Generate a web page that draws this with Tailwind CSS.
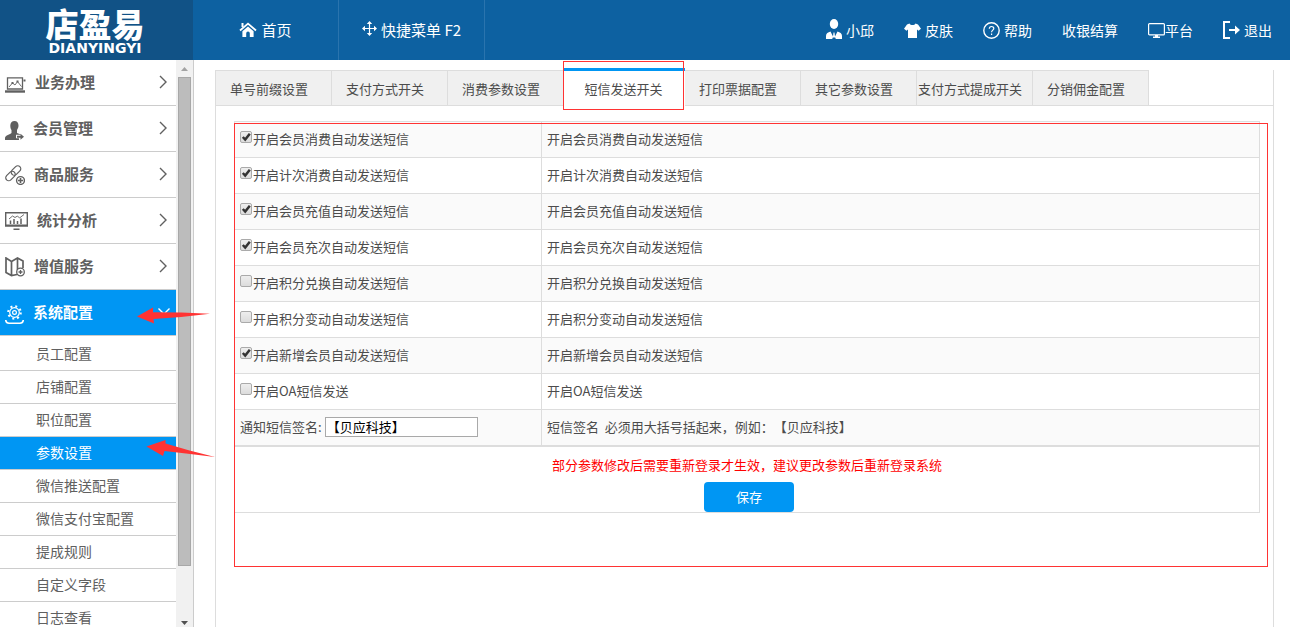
<!DOCTYPE html>
<html lang="zh-CN">
<head>
<meta charset="utf-8">
<meta name="viewport" content="width=device-width, initial-scale=1">
<title>店盈易 - 参数设置</title>
<script src="https://cdn.jsdelivr.net/npm/@tailwindcss/browser@4"></script>
</head>
<body class="flex h-screen flex-col overflow-hidden bg-white font-['Noto_Sans_CJK_SC',sans-serif] text-[13px] text-[#4c4c4c] [text-spacing-trim:space-all]">

<svg class="hidden" aria-hidden="true">
  <symbol id="chev" viewBox="0 0 8 14"><path d="M1 1l6 6-6 6" fill="none" stroke="currentColor" stroke-width="1.4"/></symbol>
  <symbol id="tick" viewBox="0 0 12 12"><path d="M2.800 6l2.400 2.600L9.800 2.800" fill="none" stroke="#333" stroke-width="2.500"/></symbol>
</svg>

<header class="flex h-[60px] shrink-0 items-stretch bg-[#0d61a1] text-white">
  <a href="#" class="flex w-[193px] shrink-0 flex-col items-center bg-[#115286] pt-[6px] pr-[3px]">
    <span class="text-[33px] leading-[34px] font-black">店盈易</span>
    <span class="mt-[2px] font-['DejaVu_Sans',sans-serif] text-[14px] leading-[12px] font-bold">DIANYINGYI</span>
  </a>
  <nav class="flex text-[15px]">
    <a href="#" class="flex w-[146px] items-center justify-center gap-1 border-r border-[#2a74ae]">
      <svg class="h-4 w-[18px]" viewBox="0 0 18 16" fill="none" stroke="#fff"><path d="M1 8.5L9 1.600l8 6.900" stroke-width="1.800"/><path d="M3.500 1v4" stroke-width="2"/><path d="M3.400 9.200L9 4.400l5.600 4.800V15h-3.800v-3.600a1.800 1.800 0 0 0-3.600 0V15H3.400z" fill="#fff" stroke="none"/></svg>
      <span>首页</span>
    </a>
    <a href="#" class="flex w-[146px] items-center justify-center gap-1 border-r border-[#2a74ae]">
      <svg class="mb-1 size-[15px]" viewBox="0 0 15 15" fill="none" stroke="#fff"><path d="M7.500 1.500v12M1.500 7.500h12" stroke-width="1.200"/><path d="M7.500 0L4.800 3h5.400zM7.500 15l-2.700-3h5.400zM0 7.500l3-2.700v5.400zM15 7.500l-3-2.700v5.400z" fill="#fff" stroke="none"/></svg>
      <span>快捷菜单 F2</span>
    </a>
  </nav>
  <nav class="ml-auto flex items-center gap-[30px] pr-[18px] text-[14px]">
    <a href="#" class="flex items-center gap-1">
      <svg class="mb-[2px] h-5 w-4" viewBox="0 0 16 20" fill="#fff"><ellipse cx="8" cy="5" rx="4.200" ry="5"/><path d="M0 20v-3c0-2.600 2-3.800 4.500-4.500L7 17.500l.5-4h1l.5 4 2.500-5C14 13.200 16 14.400 16 17v3H9.800l-.6-1.500H6.800L6.200 20z"/></svg>
      <span>小邱</span>
    </a>
    <a href="#" class="flex items-center gap-1">
      <svg class="h-[15px] w-[17px]" viewBox="0 0 17 15" fill="#fff"><path d="M5.500 0.500c1 2 5 2 6 0L14 1.500l3 4.200-2.500 2-1.500-1.200V15H4V6.500L2.500 7.700 0 5.700 3 1.500z"/></svg>
      <span>皮肤</span>
    </a>
    <a href="#" class="flex items-center gap-1">
      <svg class="size-[17px]" viewBox="0 0 17 17" fill="none" stroke="#fff"><circle cx="8.500" cy="8.500" r="7.700" stroke-width="1.400"/><path d="M6.300 6.800c0-3 4.500-3 4.500-.3 0 1.600-2.200 1.700-2.200 3.700M8.600 11.500v1.400" stroke-width="1.200"/></svg>
      <span>帮助</span>
    </a>
    <a href="#">收银结算</a>
    <a href="#" class="flex items-center">
      <svg class="h-[15px] w-[17px]" viewBox="0 0 17 15" fill="none" stroke="#fff"><rect x=".6" y=".6" width="15.800" height="11.300" rx="1" stroke-width="1.200"/><path d="M7 12h3v1.500h2V15H5v-1.500h2z" fill="#fff" stroke="none"/></svg>
      <span>平台</span>
    </a>
    <a href="#" class="flex items-center gap-1">
      <svg class="h-[18px] w-[17px]" viewBox="0 0 17 18" fill="none" stroke="#fff" stroke-width="2"><path d="M7 1H1v16h6M6 9h8"/><path d="M12 4.500L17 9l-5 4.500z" fill="#fff" stroke="none"/></svg>
      <span>退出</span>
    </a>
  </nav>
</header>

<div class="flex min-h-0 flex-1">
  <aside class="flex w-[194px] shrink-0 border-r border-[#ccc]">
    <nav class="min-w-0 flex-1 overflow-hidden text-[15px] font-bold text-[#606060]">
      <a href="#" class="flex h-[46px] items-center gap-[9px] border-b border-[#ccc] pr-[9px] pl-[5px]">
        <svg class="mt-1 h-4 w-[21px]" viewBox="0 0 21 16" fill="none" stroke="#606060"><path d="M2.500 12V.8h15V12z" stroke-width="1.300"/><path d="M0 14.500h20" stroke-width="2.400"/><path d="M4 10l3.500-4L10 8l2.500-3.400 4 5" stroke-width=".9"/><path d="M18.500 2.500h2v2h-2zM6.500 5h2v2h-2zM11.500 3.500h2v2h-2z" fill="#606060" stroke="none"/></svg>
        <span>业务办理</span><svg class="mb-[2px] ml-auto h-[14px] w-2"><use href="#chev"/></svg>
      </a>
      <a href="#" class="flex h-[46px] items-center gap-[9px] border-b border-[#ccc] pr-[9px] pl-[5px]">
        <svg class="mt-1 h-[19px] w-[19px]" viewBox="0 0 19 19" fill="#606060"><path d="M9.500 0c2.600 0 4 1.800 4 4.500 0 2-.8 3.400-1.500 4.500v3l4.500 1.800H11v3.400h3V19H0v-2c0-2.500 4-3.200 6.500-5V9C5.800 8 5.300 6.500 5.300 4.500 5.300 1.800 6.900 0 9.500 0z"/><path d="M12 14.800h3.500v-2L19 15.700l-3.500 3v-2H12z"/></svg>
        <span>会员管理</span><svg class="mb-[2px] ml-auto h-[14px] w-2"><use href="#chev"/></svg>
      </a>
      <a href="#" class="flex h-[46px] items-center gap-[9px] border-b border-[#ccc] pr-[9px] pl-[5px]">
        <svg class="h-5 w-5" viewBox="0 0 20 20" fill="none" stroke="#606060" stroke-width="1.200"><rect x="-5.500" y="-3" width="11" height="6" rx="3" transform="translate(5.500 11) rotate(-45)"/><rect x="-5.500" y="-3" width="11" height="6" rx="3" transform="translate(11 5.500) rotate(-45)"/><circle cx="15.500" cy="15.500" r="3.900" fill="#fff" stroke-width="1.400"/><path d="M15.500 13v5M13 15.500h5" stroke-width="1.600"/></svg>
        <span>商品服务</span><svg class="mb-[2px] ml-auto h-[14px] w-2"><use href="#chev"/></svg>
      </a>
      <a href="#" class="flex h-[46px] items-center gap-[9px] border-b border-[#ccc] pr-[9px] pl-[5px]">
        <svg class="h-[18px] w-[23px]" viewBox="0 0 23 18" fill="none" stroke="#606060"><path d="M.7.7h21.600v12.600H.7z" stroke-width="1.400"/><path d="M0 14h23M8.500 17.200h6" stroke-width="1.600"/><path d="M5.500 12V8.500M9 12V7M12.500 12V9M16 12V6.500" stroke-width="1.500"/><path d="M4 7l3.500-3 2.500 1.500L12.500 4l2 2L19 2.500" stroke-width=".9"/></svg>
        <span>统计分析</span><svg class="mb-[2px] ml-auto h-[14px] w-2"><use href="#chev"/></svg>
      </a>
      <a href="#" class="flex h-[46px] items-center gap-[9px] border-b border-[#ccc] pr-[9px] pl-[5px]">
        <svg class="h-5 w-5" viewBox="0 0 20 20" fill="none" stroke="#606060" stroke-width="1.700"><path d="M12 17.500l-5.500 1L1 15.500V1l5.500 3.500L12.500 1 18 4v7M6.500 4.500v14M12.500 1v12"/><circle cx="15.500" cy="15" r="3.800" fill="#fff" stroke-width="1.300"/><path d="M15.500 13v4M13.500 15h4" stroke-width="1.300"/></svg>
        <span>增值服务</span><svg class="mb-[2px] ml-auto h-[14px] w-2"><use href="#chev"/></svg>
      </a>
      <a href="#" class="flex h-[46px] items-center gap-[9px] border-b border-[#ccc] bg-[#0096f3] pr-[6px] pl-[5px] text-white">
        <svg class="mt-1 h-[19px] w-[19px]" viewBox="0 0 19 19" fill="none" stroke="#fff"><circle cx="9.500" cy="7.500" r="4.800" stroke-width="1.200"/><circle cx="9.500" cy="7.500" r="1.900" stroke-width="1.200"/><circle cx="9.500" cy="7.500" r="6.300" stroke-width="2" stroke-dasharray="2 2.950"/><path d="M.7 15c.3 2.600 1.300 3.200 3.300 3.200h11c2 0 3-.6 3.300-3.200" stroke-width="1.600"/></svg>
        <span>系统配置</span>
        <svg class="mb-[2px] ml-auto h-[7px] w-3" viewBox="0 0 12 7" fill="none" stroke="#fff" stroke-width="1.400"><path d="M.5.5L6 6 11.500.5"/></svg>
      </a>
      <div class="pt-[2px] text-[14px] font-normal">
        <a href="#" class="flex h-[33px] items-center border-b border-[#ccc] pb-[2px] pl-9">员工配置</a>
        <a href="#" class="flex h-[33px] items-center border-b border-[#ccc] pb-[2px] pl-9">店铺配置</a>
        <a href="#" class="flex h-[33px] items-center border-b border-[#ccc] pb-[2px] pl-9">职位配置</a>
        <a href="#" class="flex h-[33px] items-center border-b border-[#ccc] bg-[#0096f3] pb-[2px] pl-9 text-white">参数设置</a>
        <a href="#" class="flex h-[33px] items-center border-b border-[#ccc] pb-[2px] pl-9">微信推送配置</a>
        <a href="#" class="flex h-[33px] items-center border-b border-[#ccc] pb-[2px] pl-9">微信支付宝配置</a>
        <a href="#" class="flex h-[33px] items-center border-b border-[#ccc] pb-[2px] pl-9">提成规则</a>
        <a href="#" class="flex h-[33px] items-center border-b border-[#ccc] pb-[2px] pl-9">自定义字段</a>
        <a href="#" class="flex h-[33px] items-center border-b border-[#ccc] pb-[2px] pl-9">日志查看</a>
      </div>
    </nav>
    <div class="flex w-[17px] shrink-0 flex-col items-center bg-[#f1f1f1]" aria-hidden="true">
      <svg class="h-[17px] w-[7px] shrink-0" viewBox="0 0 7 17"><path d="M0 11l3.500-4L7 11z" fill="#a3a3a3"/></svg>
      <div class="w-[13px] flex-1 border border-[#a8a8a8] bg-[#bcbcbc]"></div>
      <svg class="mt-11 h-[17px] w-[7px] shrink-0" viewBox="0 0 7 17"><path d="M0 11l3.500 4L7 11z" fill="#505050"/></svg>
    </div>
  </aside>

  <main class="flex min-w-0 flex-1 flex-col pt-[10px] pr-4 pl-[21px]">
    <div class="flex-1 border-x border-[#ddd]">
      <nav class="flex h-9 border-b border-[#ddd] text-center leading-[35px] whitespace-nowrap">
        <a href="#" class="w-[116px] border-t border-r border-[#ddd] bg-[#f0f0f0] pr-[9px]">单号前缀设置</a>
        <a href="#" class="w-[116px] border-t border-r border-[#ddd] bg-[#f0f0f0] pr-[9px]">支付方式开关</a>
        <a href="#" class="w-[116px] border-t border-r border-[#ddd] bg-[#f0f0f0] pr-[9px]">消费参数设置</a>
        <a href="#" class="relative -mt-[2px] h-10 w-[121px] border-t-3 border-[#0096f3] bg-white pr-[2px]">短信发送开关<span class="absolute -top-[10px] -left-px h-[49px] w-[121px] border border-[#f33]"></span></a>
        <a href="#" class="w-[116px] border-t border-r border-[#ddd] bg-[#f0f0f0] pr-[9px]">打印票据配置</a>
        <a href="#" class="w-[116px] border-t border-r border-[#ddd] bg-[#f0f0f0] pr-[9px]">其它参数设置</a>
        <a href="#" class="flex w-[116px] justify-center border-t border-r border-[#ddd] bg-[#f0f0f0] pr-[9px]">支付方式提成开关</a>
        <a href="#" class="w-[116px] border-t border-r border-[#ddd] bg-[#f0f0f0] pr-[9px]">分销佣金配置</a>
      </nav>

      <form class="relative mt-[15px] mr-[13px] ml-[18px]">
        <table class="w-full table-fixed border-collapse border border-[#ddd]">
          <colgroup><col class="w-[307px]"><col></colgroup>
          <tbody>
            <tr class="h-9 border-b border-[#ddd] bg-[#fafafa]"><td class="border-r border-[#ddd] px-[5px] pb-[2px]"><label class="flex items-center gap-px"><span class="mb-[3px] grid"><input type="checkbox" checked class="peer col-start-1 row-start-1 size-3 appearance-none rounded-xs border border-[#aaa] bg-linear-to-b from-[#eee] to-[#dcdcdc]"><svg class="pointer-events-none invisible col-start-1 row-start-1 size-3 peer-checked:visible"><use href="#tick"/></svg></span>开启会员消费自动发送短信</label></td><td class="px-[5px] pb-[2px]">开启会员消费自动发送短信</td></tr>
            <tr class="h-9 border-b border-[#ddd]"><td class="border-r border-[#ddd] px-[5px] pb-[2px]"><label class="flex items-center gap-px"><span class="mb-[3px] grid"><input type="checkbox" checked class="peer col-start-1 row-start-1 size-3 appearance-none rounded-xs border border-[#aaa] bg-linear-to-b from-[#eee] to-[#dcdcdc]"><svg class="pointer-events-none invisible col-start-1 row-start-1 size-3 peer-checked:visible"><use href="#tick"/></svg></span>开启计次消费自动发送短信</label></td><td class="px-[5px] pb-[2px]">开启计次消费自动发送短信</td></tr>
            <tr class="h-9 border-b border-[#ddd] bg-[#fafafa]"><td class="border-r border-[#ddd] px-[5px] pb-[2px]"><label class="flex items-center gap-px"><span class="mb-[3px] grid"><input type="checkbox" checked class="peer col-start-1 row-start-1 size-3 appearance-none rounded-xs border border-[#aaa] bg-linear-to-b from-[#eee] to-[#dcdcdc]"><svg class="pointer-events-none invisible col-start-1 row-start-1 size-3 peer-checked:visible"><use href="#tick"/></svg></span>开启会员充值自动发送短信</label></td><td class="px-[5px] pb-[2px]">开启会员充值自动发送短信</td></tr>
            <tr class="h-9 border-b border-[#ddd]"><td class="border-r border-[#ddd] px-[5px] pb-[2px]"><label class="flex items-center gap-px"><span class="mb-[3px] grid"><input type="checkbox" checked class="peer col-start-1 row-start-1 size-3 appearance-none rounded-xs border border-[#aaa] bg-linear-to-b from-[#eee] to-[#dcdcdc]"><svg class="pointer-events-none invisible col-start-1 row-start-1 size-3 peer-checked:visible"><use href="#tick"/></svg></span>开启会员充次自动发送短信</label></td><td class="px-[5px] pb-[2px]">开启会员充次自动发送短信</td></tr>
            <tr class="h-9 border-b border-[#ddd] bg-[#fafafa]"><td class="border-r border-[#ddd] px-[5px] pb-[2px]"><label class="flex items-center gap-px"><span class="mb-[3px] grid"><input type="checkbox" class="peer col-start-1 row-start-1 size-3 appearance-none rounded-xs border border-[#aaa] bg-linear-to-b from-[#eee] to-[#dcdcdc]"><svg class="pointer-events-none invisible col-start-1 row-start-1 size-3 peer-checked:visible"><use href="#tick"/></svg></span>开启积分兑换自动发送短信</label></td><td class="px-[5px] pb-[2px]">开启积分兑换自动发送短信</td></tr>
            <tr class="h-9 border-b border-[#ddd]"><td class="border-r border-[#ddd] px-[5px] pb-[2px]"><label class="flex items-center gap-px"><span class="mb-[3px] grid"><input type="checkbox" class="peer col-start-1 row-start-1 size-3 appearance-none rounded-xs border border-[#aaa] bg-linear-to-b from-[#eee] to-[#dcdcdc]"><svg class="pointer-events-none invisible col-start-1 row-start-1 size-3 peer-checked:visible"><use href="#tick"/></svg></span>开启积分变动自动发送短信</label></td><td class="px-[5px] pb-[2px]">开启积分变动自动发送短信</td></tr>
            <tr class="h-9 border-b border-[#ddd] bg-[#fafafa]"><td class="border-r border-[#ddd] px-[5px] pb-[2px]"><label class="flex items-center gap-px"><span class="mb-[3px] grid"><input type="checkbox" checked class="peer col-start-1 row-start-1 size-3 appearance-none rounded-xs border border-[#aaa] bg-linear-to-b from-[#eee] to-[#dcdcdc]"><svg class="pointer-events-none invisible col-start-1 row-start-1 size-3 peer-checked:visible"><use href="#tick"/></svg></span>开启新增会员自动发送短信</label></td><td class="px-[5px] pb-[2px]">开启新增会员自动发送短信</td></tr>
            <tr class="h-9 border-b border-[#ddd]"><td class="border-r border-[#ddd] px-[5px] pb-[2px]"><label class="flex items-center gap-px"><span class="mb-[3px] grid"><input type="checkbox" class="peer col-start-1 row-start-1 size-3 appearance-none rounded-xs border border-[#aaa] bg-linear-to-b from-[#eee] to-[#dcdcdc]"><svg class="pointer-events-none invisible col-start-1 row-start-1 size-3 peer-checked:visible"><use href="#tick"/></svg></span>开启OA短信发送</label></td><td class="px-[5px] pb-[2px]">开启OA短信发送</td></tr>
            <tr class="h-9 border-b border-[#ddd] bg-[#fafafa]"><td class="border-r border-[#ddd] px-[5px] pb-[2px]"><div class="flex items-center gap-[3px]"><label for="sign">通知短信签名:</label><input id="sign" type="text" value="【贝应科技】" class="h-5 w-[153px] border border-[#a9a9a9] bg-white px-px text-black"></div></td><td class="px-[5px] pb-[2px]">短信签名&nbsp; 必须用大括号括起来，例如：【贝应科技】</td></tr>
          </tbody>
        </table>
        <div class="flex flex-col items-center border border-[#ddd] pt-2">
          <p class="leading-5 text-[#f00]">部分参数修改后需要重新登录才生效，建议更改参数后重新登录系统</p>
          <button type="button" class="mt-[7px] ml-1 h-[30px] w-[90px] rounded bg-[#0096f3] text-white">保存</button>
        </div>
        <div class="pointer-events-none absolute top-[2px] -right-2 -bottom-[54px] left-0 border border-[#f33]"></div>
      </form>
    </div>
  </main>
</div>

<svg class="pointer-events-none absolute top-[307px] left-[137px] h-[17px] w-[74px]" viewBox="0 0 74 17"><path d="M0 9.500L16 .5v4.700L44 5.500l29 1.200-29 3.300-27.500 2L17 16.500z" fill="#ff3333"/></svg>
<svg class="pointer-events-none absolute top-[439px] left-[146px] h-[19px] w-[70px]" viewBox="0 0 70 19"><path d="M.5 7.500L19.500 1 19.500 4.500l24 7L69 18l-29-3.500L18.500 12l-1.500 5z" fill="#ff3333"/></svg>
</body>
</html>
